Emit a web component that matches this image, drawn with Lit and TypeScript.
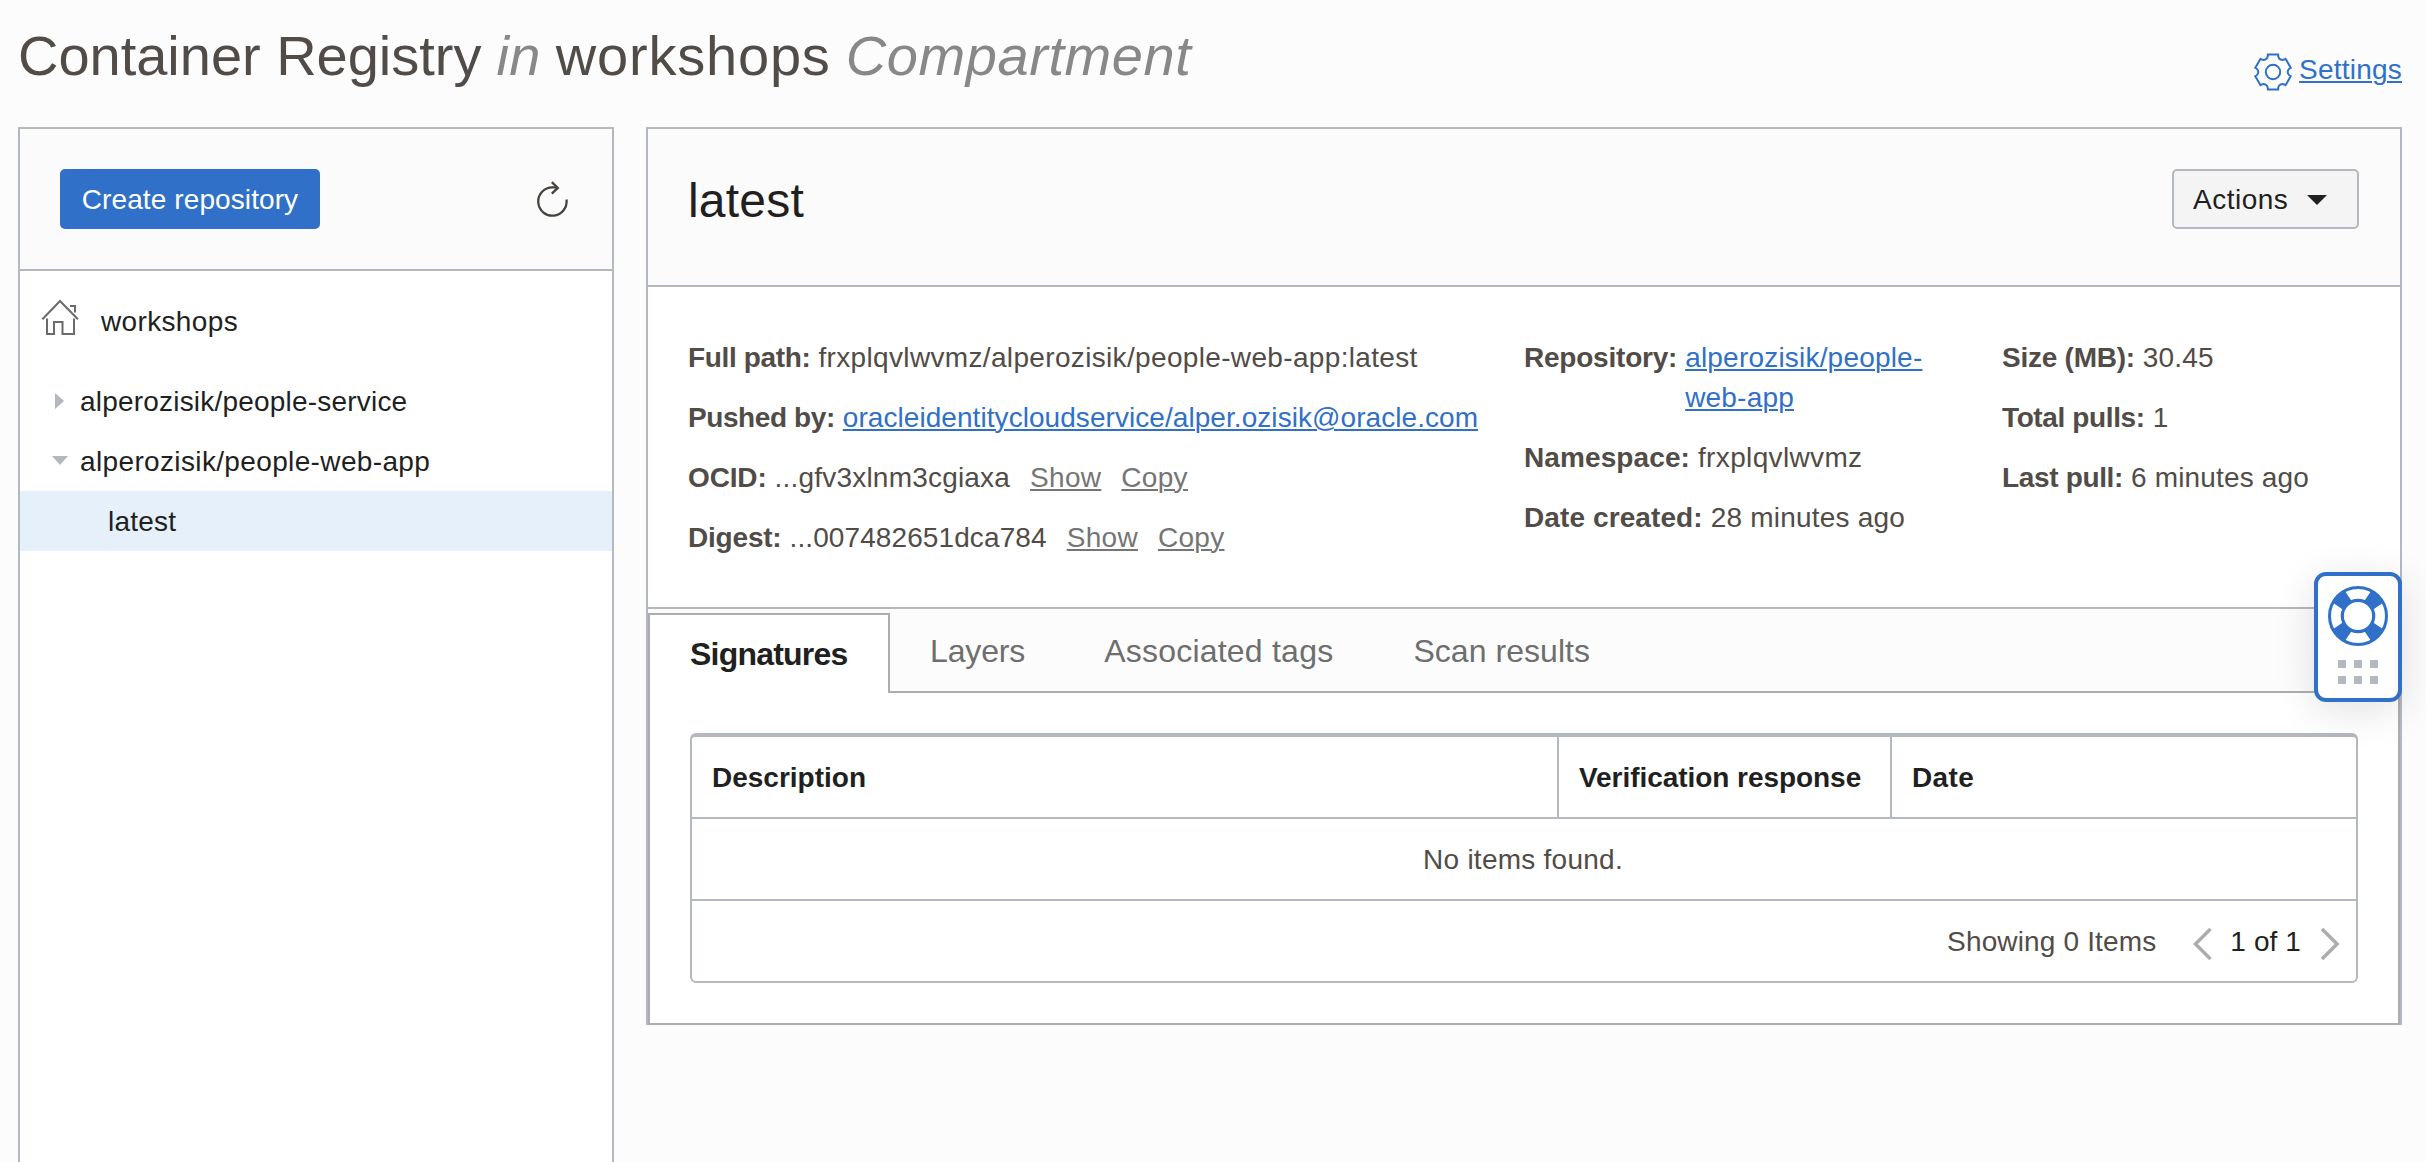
import { LitElement, html, css, svg, nothing, type TemplateResult } from "lit";
import { customElement, state } from "lit/decorators.js";
import { classMap } from "lit/directives/class-map.js";
import { styleMap } from "lit/directives/style-map.js";

interface Field {
  label: string;
  track: number;
  value: string;
  valueTrack: number;
  link?: boolean;
  tools?: boolean;
}

const FIELDS: Field[][] = [
  [
    { label: "Full path:", track: -0.35, value: "frxplqvlwvmz/alperozisik/people-web-app:latest", valueTrack: 0.34 },
    { label: "Pushed by:", track: -0.41, value: "oracleidentitycloudservice/alper.ozisik@oracle.com", valueTrack: 0.06, link: true },
    { label: "OCID:", track: -0.15, value: "...gfv3xlnm3cgiaxa", valueTrack: 0.2, tools: true },
    { label: "Digest:", track: -0.2, value: "...007482651dca784", valueTrack: 0.1, tools: true },
  ],
  [
    { label: "Repository:", track: -0.22, value: "alperozisik/people-web-app", valueTrack: 0.2, link: true },
    { label: "Namespace:", track: 0.1, value: "frxplqvlwvmz", valueTrack: 0.35 },
    { label: "Date created:", track: 0.1, value: "28 minutes ago", valueTrack: 0.2 },
  ],
  [
    { label: "Size (MB):", track: -0.25, value: "30.45", valueTrack: 0.15 },
    { label: "Total pulls:", track: -0.38, value: "1", valueTrack: 0 },
    { label: "Last pull:", track: -0.34, value: "6 minutes ago", valueTrack: 0.15 },
  ],
];

const TABS = ["Signatures", "Layers", "Associated tags", "Scan results"];

/* Outline of a six-toothed gear with a rounded notch between the teeth. */
const gearPath = (() => {
  const pts: string[] = [];
  const teeth = 6;
  for (let i = 0; i < teeth; i++) {
    const a = (i * 360) / teeth - 90;
    const p = (r: number, d: number) => {
      const t = ((a + d) * Math.PI) / 180;
      return `${(19 + r * Math.cos(t)).toFixed(2)} ${(19 + r * Math.sin(t)).toFixed(2)}`;
    };
    pts.push(`${i ? "L" : "M"}${p(18.2, -16.5)}L${p(18.2, 16.5)}L${p(16.8, 18)}A4.4 4.4 0 0 0 ${p(16.8, 42)}`);
  }
  return pts.join("") + "Z";
})();

@customElement("registry-tree")
class RegistryTree extends LitElement {
  static styles = css`
    :host {
      display: block;
      box-sizing: border-box;
      border: 2px solid #b4b9c0;
      border-bottom: 0;
      background: #fff;
      color: #221f1f;
    }
    .head {
      display: flex;
      align-items: center;
      justify-content: space-between;
      box-sizing: border-box;
      height: 142px;
      padding: 0 42px 0 40px;
      background: #fbfbfb;
      border-bottom: 2px solid #b4b9c0;
    }
    .create {
      height: 60px;
      width: 260px;
      padding: 2px 0 0;
      border: 0;
      border-radius: 5px;
      background: #3070c8;
      color: #fff;
      font: inherit;
      letter-spacing: 0.1px;
    }
    .refresh {
      display: block;
      width: 36px;
      height: 36px;
    }
    .home {
      display: flex;
      align-items: center;
      gap: 21px;
      box-sizing: border-box;
      height: 100px;
      padding: 2px 0 0 20px;
      letter-spacing: 0.35px;
    }
    .home svg {
      width: 40px;
      height: 40px;
      margin-bottom: 8px;
    }
    .row {
      display: flex;
      align-items: center;
      box-sizing: border-box;
      height: 60px;
      padding: 2px 0 0 30px;
    }
    .row svg {
      width: 20px;
      height: 20px;
      margin: 0 10px 2px 0;
    }
    .service { letter-spacing: 0.2px; }
    .webapp { letter-spacing: 0.36px; }
    .leaf {
      padding-left: 88px;
      background: #e6f0fa;
      letter-spacing: 0.2px;
    }
  `;
  render() {
    return html`
      <div class="head">
        <button class="create">Create repository</button>
        <svg class="refresh" viewBox="0 0 36 36" fill="none" stroke="#46423e" stroke-width="2.300">
          <path d="M32.5 18.500A14.200 14.200 0 1 1 18.3 6.300h5" />
          <path d="M17.800 1.200l6 5.700-6 5.700" />
        </svg>
      </div>
      <div class="home">
        <svg viewBox="0 0 40 40" fill="none" stroke="#6b6b6b" stroke-width="2">
          <path d="M2.400 21.300L20 3l17.900 18.300M30 8h5v6.500M7 20.500V36h7V24h8.500v12H34V20.500" />
        </svg>
        <span>workshops</span>
      </div>
      <div class="row service">
        <svg viewBox="0 0 20 20"><path d="M5 2l9 8-9 8z" fill="#b2b8c0" /></svg>
        alperozisik/people-service
      </div>
      <div class="row webapp">
        <svg viewBox="0 0 20 20"><path d="M2 5h16l-8 9z" fill="#b2b8c0" /></svg>
        alperozisik/people-web-app
      </div>
      <div class="row leaf">latest</div>
    `;
  }
}

@customElement("signature-table")
class SignatureTable extends LitElement {
  static styles = css`
    :host {
      display: block;
      box-sizing: border-box;
      border: 2px solid #b4b9c0;
      border-top-width: 4px;
      border-radius: 6px;
      height: 250px;
    }
    .head {
      display: grid;
      grid-template-columns: 865px 333px 1fr;
      height: 80px;
      font-weight: bold;
      color: #221f1f;
    }
    .cell {
      display: flex;
      align-items: center;
      padding: 2px 0 0 20px;
      border-left: 2px solid #b4b9c0;
    }
    .cell:first-child { border-left: 0; }
    .verify { letter-spacing: -0.05px; }
    .date { letter-spacing: 0.4px; }
    .empty, .foot {
      display: flex;
      align-items: center;
      box-sizing: border-box;
      height: 82px;
      padding-top: 2px;
      border-top: 2px solid #b4b9c0;
      color: #514c47;
    }
    .empty {
      justify-content: center;
      padding-right: 2px;
      letter-spacing: 0.25px;
    }
    .foot {
      justify-content: flex-end;
      padding-right: 15px;
    }
    .count { letter-spacing: 0.15px; margin-right: 36px; }
    .page { color: #221f1f; letter-spacing: 0.1px; margin: 0 19px 0 17px; }
    svg { width: 21px; height: 34px; margin-top: 3px; }
  `;
  render() {
    return html`
      <div class="head">
        <div class="cell">Description</div>
        <div class="cell verify">Verification response</div>
        <div class="cell date">Date</div>
      </div>
      <div class="empty">No items found.</div>
      <div class="foot">
        <span class="count">Showing 0 Items</span>
        <svg viewBox="0 0 21 34" fill="none" stroke="#adadad" stroke-width="3.500"><path d="M18.500 2L3.500 17l15 15" /></svg>
        <span class="page">1 of 1</span>
        <svg viewBox="0 0 21 34" fill="none" stroke="#adadad" stroke-width="3.500"><path d="M2 2l15 15L2 32" /></svg>
      </div>
    `;
  }
}

@customElement("help-widget")
class HelpWidget extends LitElement {
  static styles = css`
    :host {
      display: flex;
      flex-direction: column;
      align-items: center;
      box-sizing: border-box;
      width: 88px;
      height: 130px;
      padding-top: 10px;
      border: 4px solid #3070c8;
      border-radius: 12px;
      background: #fff;
      box-shadow: 0 8px 40px rgba(0, 0, 0, 0.12);
    }
    svg { width: 60px; height: 60px; }
    .grip {
      display: grid;
      grid-template-columns: repeat(3, 8px);
      grid-auto-rows: 8px;
      gap: 8px;
      margin-top: 14px;
    }
    .dot { background: #b4b9c0; }
  `;
  render() {
    const spokes = [45, 135, 225, 315].map(
      (a) => svg`<path d="M21.500 2.500h17L36 15.500H24z" transform="rotate(${a} 30 30)" fill="#3070c8"/>`,
    );
    return html`
      <svg viewBox="0 0 60 60" fill="none" stroke="none">
        ${spokes}
        <circle cx="30" cy="30" r="28.500" stroke="#3070c8" stroke-width="3" />
        <circle cx="30" cy="30" r="15.700" stroke="#3070c8" stroke-width="3.200" fill="#fff" />
      </svg>
      <div class="grip">${Array.from({ length: 6 }, () => html`<span class="dot"></span>`)}</div>
    `;
  }
}

@customElement("app-root")
class AppRoot extends LitElement {
  static styles = css`
    :host {
      display: block;
      position: relative;
      box-sizing: border-box;
      height: 1162px;
      overflow: hidden;
      padding: 0 24px 0 18px;
      background: #fcfcfc;
      font: 28px/40px "Liberation Sans", Arial, sans-serif;
      color: #514c47;
    }
    a {
      color: #3070c8;
      text-decoration: underline;
      text-decoration-thickness: 2px;
      text-underline-offset: 2px;
    }
    .top {
      display: flex;
      justify-content: space-between;
      height: 127px;
      box-sizing: border-box;
    }
    h1 {
      display: flex;
      gap: 15px;
      margin: 21px 0 0;
      font-size: 56px;
      line-height: 70px;
      font-weight: normal;
      height: 70px;
    }
    h1 em { color: #888; }
    .t1 { letter-spacing: -0.02px; }
    .t2 { letter-spacing: 0.4px; }
    .t3 { letter-spacing: 0.8px; }
    .t4 { letter-spacing: 0.6px; }
    .settings {
      display: flex;
      gap: 7px;
      height: 40px;
      margin-top: 50px;
      letter-spacing: 0.22px;
    }
    .settings svg { width: 38px; height: 38px; margin-top: 3px; }
    .body {
      display: grid;
      grid-template-columns: 596px 1756px;
      gap: 32px;
      height: 1035px;
    }
    .detail {
      box-sizing: border-box;
      height: 898px;
      border: 2px solid #b4b9c0;
      border-bottom: 0;
      background: #fff;
    }
    .head {
      display: flex;
      justify-content: space-between;
      align-items: flex-start;
      box-sizing: border-box;
      height: 158px;
      padding: 40px 41px 0 40px;
      background: #fbfbfb;
      border-bottom: 2px solid #b4b9c0;
    }
    h2 {
      margin: 2px 0 0;
      font-size: 48px;
      line-height: 60px;
      font-weight: normal;
      color: #221f1f;
      letter-spacing: 0.2px;
    }
    .actions {
      display: flex;
      align-items: center;
      gap: 19px;
      box-sizing: border-box;
      width: 187px;
      height: 60px;
      padding: 2px 0 0 19px;
      border: 2px solid #b4b9c0;
      border-radius: 5px;
      background: #f4f4f4;
      color: #221f1f;
      font: inherit;
      letter-spacing: 0.5px;
    }
    .actions svg { width: 20px; height: 10px; }
    .fields {
      display: grid;
      grid-template-columns: 836px 478px 1fr;
      box-sizing: border-box;
      height: 322px;
      padding: 51px 0 0 40px;
      border-bottom: 2px solid #b4b9c0;
    }
    .col {
      display: flex;
      flex-direction: column;
      gap: 20px;
      padding-right: 60px;
    }
    .field { display: flex; }
    .field b { margin-right: 8px; white-space: nowrap; }
    .tool { margin-left: 20px; color: #757575; letter-spacing: 0.3px; }
    .tabs {
      display: flex;
      box-sizing: border-box;
      height: 84px;
      padding-top: 4px;
      background: linear-gradient(#adadad, #adadad) bottom / 100% 2px no-repeat #fcfcfc;
    }
    .tab {
      box-sizing: border-box;
      height: 76px;
      padding: 18px 40px 0;
      font-size: 32px;
      color: #6e6e6e;
    }
    .tab.active {
      width: 242px;
      height: 80px;
      padding: 19px 0 0 40px;
      border: 2px solid #adadad;
      border-bottom: 0;
      background: #fff;
      color: #221f1f;
      font-weight: bold;
      letter-spacing: -0.78px;
    }
    .tab1 { letter-spacing: -0.15px; }
    .tab2 { letter-spacing: 0.22px; margin-left: -1px; }
    .tab3 { letter-spacing: 0.05px; }
    .panel {
      box-sizing: border-box;
      height: 332px;
      padding: 40px 40px 0;
      border: 2px solid #adadad;
      border-top: 0;
    }
    help-widget {
      position: absolute;
      top: 572px;
      right: 24px;
    }
  `;

  @state() private tab = 0;

  private field(f: Field): TemplateResult {
    const v = styleMap({ letterSpacing: `${f.valueTrack}px` });
    return html`<div class="field">
      <b style=${styleMap({ letterSpacing: `${f.track}px` })}>${f.label}</b>
      ${f.link ? html`<a style=${v}>${f.value}</a>` : html`<span style=${v}>${f.value}</span>`}
      ${f.tools ? html`<a class="tool">Show</a><a class="tool">Copy</a>` : nothing}
    </div>`;
  }

  render() {
    return html`
      <header class="top">
        <h1>
          <span class="t1">Container Registry</span><em class="t2">in</em><span class="t3">workshops</span
          ><em class="t4">Compartment</em>
        </h1>
        <div class="settings">
          <svg viewBox="0 0 38 38" fill="none" stroke="#3070c8" stroke-width="2">
            <path d=${gearPath} />
            <circle cx="19" cy="19" r="7.200" />
          </svg>
          <a>Settings</a>
        </div>
      </header>
      <main class="body">
        <registry-tree></registry-tree>
        <section class="detail">
          <div class="head">
            <h2>latest</h2>
            <button class="actions">
              Actions
              <svg viewBox="0 0 20 10"><path d="M0 0h20L10 10z" fill="#221f1f" /></svg>
            </button>
          </div>
          <div class="fields">
            ${FIELDS.map((c) => html`<div class="col">${c.map((f) => this.field(f))}</div>`)}
          </div>
          <nav class="tabs">
            ${TABS.map(
              (t, i) => html`<div
                class=${classMap({ tab: true, [`tab${i}`]: true, active: i === this.tab })}
                @click=${() => (this.tab = i)}
              >${t}</div>`,
            )}
          </nav>
          <div class="panel"><signature-table></signature-table></div>
        </section>
      </main>
      <help-widget></help-widget>
    `;
  }
}
